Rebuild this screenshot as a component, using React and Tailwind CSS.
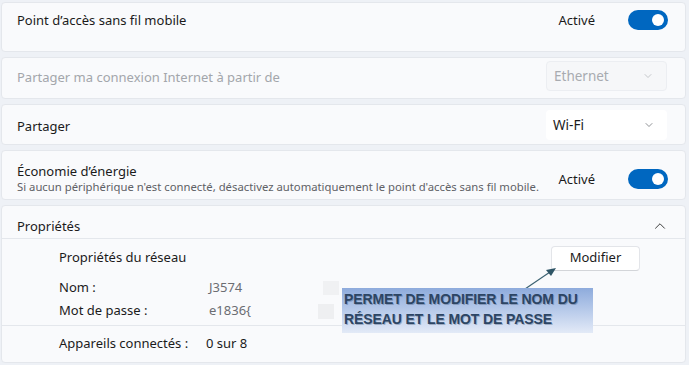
import { ChevronDown, ChevronUp } from 'lucide-react'

function Toggle() {
  return (
    <div className="w-[40px] h-[20px] rounded-full bg-[#0067c0] flex items-center justify-end pr-[4px]">
      <div className="w-[12px] h-[12px] rounded-full bg-white" />
    </div>
  )
}

function Select({ label, disabled }) {
  return (
    <div
      className={`w-[121px] h-[30px] rounded-[4px] flex items-center justify-between pl-[7px] pr-[12px] ${
        disabled ? 'bg-[#f6f7f9] border border-[#eceef2] text-[#a8abb0]' : 'bg-white text-[#1b1b1b]'
      }`}
    >
      <span className="text-[13.5px]">{label}</span>
      <ChevronDown size={12} strokeWidth={1.4} className={disabled ? 'text-[#b0b3b8]' : 'text-[#606368]'} />
    </div>
  )
}

export default function App() {
  return (
    <div
      className="w-[689px] h-[365px] bg-[#eef1f6] pt-[2px] pl-[1px] pr-[3px] flex flex-col gap-[5px] text-[#1b1b1b] relative overflow-hidden"
      style={{ fontFamily: '"Noto Sans", "Open Sans", sans-serif' }}
    >
      {/* Point d'accès */}
      <div className="h-[50px] bg-[#f9fafc] border border-[#e4e7ec] rounded-[4px] flex items-start justify-between pl-[15px] pr-[17px] pt-[7px]">
        <span className="text-[13px] leading-[20px]">Point d’accès sans fil mobile</span>
        <div className="flex items-center gap-[33px]">
          <span className="text-[13px] leading-[20px]">Activé</span>
          <Toggle />
        </div>
      </div>

      {/* Partager ma connexion */}
      <div className="h-[42px] bg-[#f9fafc] border border-[#e4e7ec] rounded-[4px] flex items-start justify-between pl-[15px] pr-[18px] pt-[3px]">
        <span className="text-[13px] leading-[20px] text-[#a3a6ab] mt-[6px]">Partager ma connexion Internet à partir de</span>
        <Select label="Ethernet" disabled />
      </div>

      {/* Partager */}
      <div className="h-[41px] bg-[#f9fafc] border border-[#e4e7ec] rounded-[4px] flex items-start justify-between pl-[15px] pr-[18px] pt-[5px]">
        <span className="text-[13px] leading-[20px] mt-[6px]">Partager</span>
        <Select label="Wi-Fi" />
      </div>

      {/* Économie d'énergie */}
      <div className="h-[50px] bg-[#f9fafc] border border-[#e4e7ec] rounded-[4px] flex items-start justify-between pl-[15px] pr-[17px] pt-[11px]">
        <div className="flex flex-col">
          <span className="text-[13px] leading-[18px]">Économie d’énergie</span>
          <span className="text-[11.3px] leading-[14px] text-[#5f6166]">
            Si aucun périphérique n'est connecté, désactivez automatiquement le point d'accès sans fil mobile.
          </span>
        </div>
        <div className="flex items-center gap-[33px] mt-[7px]">
          <span className="text-[13px] leading-[20px]">Activé</span>
          <Toggle />
        </div>
      </div>

      {/* Propriétés */}
      <div className="h-[158px] bg-[#f9fafc] border border-[#e4e7ec] rounded-[4px] flex flex-col">
        <div className="h-[33px] flex items-start justify-between pl-[15px] pr-[16px] pt-[10px] border-b border-[#e4e7ec]">
          <span className="text-[13px] leading-[20px]">Propriétés</span>
          <ChevronUp size={18} strokeWidth={1.3} className="text-[#3a3a3a] mt-[1px]" />
        </div>
        <div className="flex flex-col pl-[57px] pr-[45px] border-b border-[#e4e7ec] text-[13px]">
          <div className="flex items-center justify-between h-[38px]">
            <span>Propriétés du réseau</span>
            <div className="w-[89px] h-[25px] bg-white border border-[#e3e5e9] border-b-[#d3d5d9] rounded-[4px] flex items-center justify-center">
              Modifier
            </div>
          </div>
          <div className="flex items-center h-[22px]">
            <span className="w-[150px]">Nom :</span>
            <span className="text-[#6b6d72] w-[114px]">J3574</span>
            <div className="w-[16px] h-[14px] bg-[#f0f1f3]" />
          </div>
          <div className="flex items-center h-[24px]">
            <span className="w-[150px]">Mot de passe :</span>
            <span className="text-[#6b6d72] w-[109px]">e1836{'{'}</span>
            <div className="w-[16px] h-[15px] bg-[#eeeff1]" />
          </div>
          <div className="h-[2px]" />
        </div>
        <div className="flex items-center h-[36px] pl-[57px] text-[13px]">
          <span className="w-[147px]">Appareils connectés :</span>
          <span>0 sur 8</span>
        </div>
      </div>

      {/* Annotation */}
      <svg className="absolute left-[520px] top-[262px]" width="40" height="30" viewBox="0 0 40 30">
        <line x1="5" y1="27" x2="30" y2="10" stroke="#3c6272" strokeWidth="1.2" />
        <polygon points="36,6 26,8 31,14" fill="#2f5566" />
      </svg>
      <div
        className="absolute left-[342px] top-[288px] w-[251px] h-[45px] bg-gradient-to-b from-[#8eabdc] to-[#e3eaf7] pl-[2px] pt-[1px] flex flex-col text-[#2c4564] font-bold text-[14px] leading-[20px] tracking-[-0.1px]"
        style={{ fontFamily: '"Liberation Sans", Arial, sans-serif', textShadow: '1px 1px 0 rgba(60,80,110,0.35)' }}
      >
        <span>PERMET DE MODIFIER LE NOM DU</span>
        <span>RÉSEAU ET LE MOT DE PASSE</span>
      </div>
    </div>
  )
}
